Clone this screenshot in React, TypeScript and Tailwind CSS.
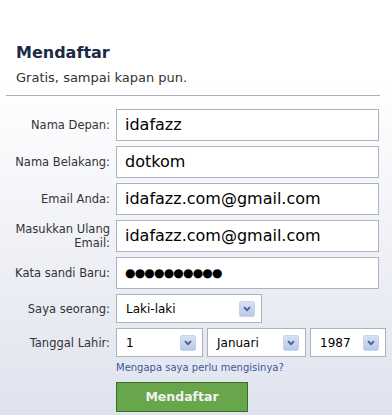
import React from "react";

const FONT = { fontFamily: '"DejaVu Sans", Verdana, sans-serif' };

function Arrow() {
  return (
    <span className="flex h-4 w-4 items-center justify-center rounded-[2px] border border-[#c9d4ec] bg-gradient-to-b from-[#d7e1f6] to-[#b9c9ec]">
      <svg width="8" height="6" viewBox="0 0 8 6">
        <path d="M1 1.2 L4 4.2 L7 1.2" fill="none" stroke="#4a5f87" strokeWidth="1.8" />
      </svg>
    </span>
  );
}

function Select({ value, className }: { value: string; className: string }) {
  return (
    <div
      className={`flex h-[29px] items-center justify-between border border-[#abb3c1] bg-white pl-[9px] pr-[6px] text-[12px] text-black ${className}`}
    >
      <span>{value}</span>
      <Arrow />
    </div>
  );
}

function Row({ label, children }: { label: React.ReactNode; children: React.ReactNode }) {
  return (
    <div className="flex items-center">
      <div className="w-[116px] shrink-0 pr-[6px] text-right text-[11.5px] leading-[14px] text-[#333]">{label}</div>
      {children}
    </div>
  );
}

function Field({ value }: { value: React.ReactNode }) {
  return (
    <div className="flex h-[32px] w-[263px] items-center border border-[#abb3c1] bg-white pl-[8px] text-[16px] text-black">
      {value}
    </div>
  );
}

export default function App() {
  return (
    <div
      style={FONT}
      className="h-[415px] w-[392px] overflow-hidden bg-gradient-to-b from-white from-20% to-[#e0e3ee]"
    >
      <div className="px-[16px] pt-[42px]">
        <h1 className="text-[16px] font-bold leading-[22px] text-[#1c2a47]">Mendaftar</h1>
        <p className="mt-[5px] text-[13px] leading-[18px] text-[#333]">Gratis, sampai kapan pun.</p>
      </div>
      <div className="ml-[6px] mt-[8px] w-[374px] border-t border-[#a8b0bf]" />
      <div className="mt-[13px] flex flex-col gap-[5px]">
        <Row label="Nama Depan:">
          <Field value="idafazz" />
        </Row>
        <Row label="Nama Belakang:">
          <Field value="dotkom" />
        </Row>
        <Row label="Email Anda:">
          <Field value="idafazz.com@gmail.com" />
        </Row>
        <Row
          label={
            <>
              Masukkan Ulang
              <br />
              Email:
            </>
          }
        >
          <Field value="idafazz.com@gmail.com" />
        </Row>
        <Row label="Kata sandi Baru:">
          <Field value={<span className="text-[12px] tracking-[-0.8px]">●●●●●●●●●●</span>} />
        </Row>
        <Row label="Saya seorang:">
          <Select value="Laki-laki" className="w-[146px]" />
        </Row>
        <Row label="Tanggal Lahir:">
          <div className="flex gap-[4px]">
            <Select value="1" className="w-[87px]" />
            <Select value="Januari" className="w-[99px]" />
            <Select value="1987" className="w-[76px]" />
          </div>
        </Row>
        <div className="ml-[116px] mt-[-1px] text-[10px] leading-[13px] text-[#3b5998]">
          Mengapa saya perlu mengisinya?
        </div>
      </div>
      <div className="ml-[116px] mt-[8px] flex h-[30px] w-[132px] items-center justify-center border border-[#3d6e26] bg-[#68a64c] text-[12.5px] font-bold text-[#f2f2f2]">
        Mendaftar
      </div>
    </div>
  );
}
